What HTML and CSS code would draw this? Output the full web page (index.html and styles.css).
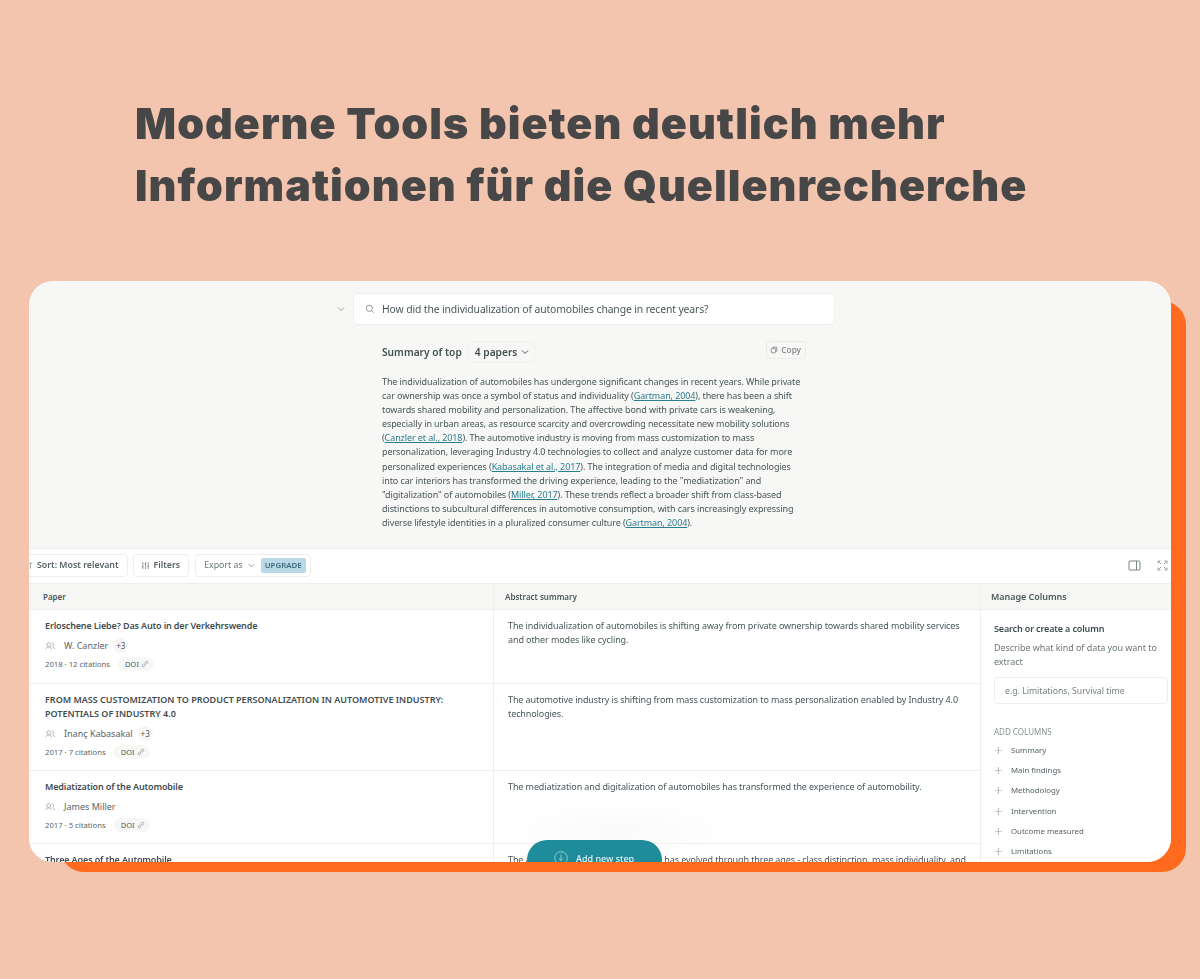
FILE: index.html
```html
<!DOCTYPE html>
<html lang="de">
<head>
<meta charset="utf-8">
<title>Quellenrecherche</title>
<link rel="stylesheet" href="styles.css">
</head>
<body>
<main class="page">
  <h1 class="headline">Moderne Tools bieten deutlich mehr<br>Informationen für die Quellenrecherche</h1>
  <div class="stage">
    <div class="backing"></div>
    <section class="card">
      <div class="top">
        <div class="query-row">
          <svg class="chev" viewBox="0 0 10 10"><path d="M2 3.500 5 6.500 8 3.500"/></svg>
          <div class="query">
            <svg class="search" viewBox="0 0 12 12"><circle cx="5.200" cy="5.200" r="3.700"/><path d="M8 8l2.600 2.600"/></svg>
            <span>How did the individualization of automobiles change in recent years?</span>
          </div>
        </div>
        <div class="summary">
          <div class="summary-head">
            <span class="summary-title">Summary of top</span>
            <span class="papers">4 papers <svg class="chev dark" viewBox="0 0 10 10"><path d="M2 3.500 5 6.500 8 3.500"/></svg></span>
            <span class="copy"><svg viewBox="0 0 10 10"><rect x="1.500" y="3" width="5.500" height="5.500" rx="1"/><path d="M3.500 3V1.500h5v5H7"/></svg>Copy</span>
          </div>
          <p class="summary-text">The individualization of automobiles has undergone significant changes in recent years. While private<br>
car ownership was once a symbol of status and individuality (<a>Gartman, 2004</a>), there has been a shift<br>
towards shared mobility and personalization. The affective bond with private cars is weakening,<br>
especially in urban areas, as resource scarcity and overcrowding necessitate new mobility solutions<br>
(<a>Canzler et al., 2018</a>). The automotive industry is moving from mass customization to mass<br>
personalization, leveraging Industry 4.0 technologies to collect and analyze customer data for more<br>
personalized experiences (<a>Kabasakal et al., 2017</a>). The integration of media and digital technologies<br>
into car interiors has transformed the driving experience, leading to the "mediatization" and<br>
"digitalization" of automobiles (<a>Miller, 2017</a>). These trends reflect a broader shift from class-based<br>
distinctions to subcultural differences in automotive consumption, with cars increasingly expressing<br>
diverse lifestyle identities in a pluralized consumer culture (<a>Gartman, 2004</a>).</p>
        </div>
      </div>
      <div class="toolbar">
        <span class="tool sort"><svg viewBox="0 0 10 10"><path d="M3 1.500v7M3 8.500 1.500 7M7 1.500v7M7 1.500 8.500 3"/></svg>Sort: Most relevant</span>
        <span class="tool filters"><svg viewBox="0 0 10 10"><path d="M2 1v8M5 1v8M8 1v8M1 6.500h2M4 3.500h2M7 6h2"/></svg>Filters</span>
        <span class="tool export">Export as <svg class="chev" viewBox="0 0 10 10"><path d="M2 3.500 5 6.500 8 3.500"/></svg><b class="upgrade">UPGRADE</b></span>
        <span class="tool-icons">
          <svg class="panel" viewBox="0 0 13 11"><rect x="1" y="1" width="11" height="9" rx="1"/><path d="M8.500 1v9"/></svg>
          <svg class="expand" viewBox="0 0 11 11"><path d="M1 3.500V1h2.500M7.500 1H10v2.500M10 7.500V10H7.500M3.500 10H1V7.500M1 1l3 3M10 1 7 4M10 10 7 7M1 10l3-3"/></svg>
        </span>
      </div>
      <div class="table">
        <div class="col col-paper">
          <div class="col-head">Paper</div>
          <article class="paper h74">
            <h3>Erloschene Liebe? Das Auto in der Verkehrswende</h3>
            <div class="authors"><svg class="people" viewBox="0 0 12 9"><circle cx="4" cy="3" r="2.200"/><path d="M.8 8c.4-1.700 1.600-2.500 3.200-2.500S6.800 6.300 7.200 8M7.500 1c1.300 0 2 .9 2 2s-.7 2-1.500 2M9 5.800c1 .3 1.700 1.100 2 2.200"/></svg><span>W. Canzler</span><em>+3</em></div>
            <div class="meta"><span>2018 · 12 citations</span><span class="doi">DOI <svg viewBox="0 0 10 10"><path d="M4 6l2-2M3.500 4.500 2 6a1.400 1.400 0 0 0 2 2l1.500-1.500M4.500 3.500 6 2a1.400 1.400 0 0 1 2 2L6.500 5.500"/></svg></span></div>
          </article>
          <article class="paper h87">
            <h3 class="caps">FROM MASS CUSTOMIZATION TO PRODUCT PERSONALIZATION IN AUTOMOTIVE INDUSTRY: POTENTIALS OF INDUSTRY 4.0</h3>
            <div class="authors"><svg class="people" viewBox="0 0 12 9"><circle cx="4" cy="3" r="2.200"/><path d="M.8 8c.4-1.700 1.600-2.500 3.200-2.500S6.800 6.300 7.200 8M7.500 1c1.300 0 2 .9 2 2s-.7 2-1.500 2M9 5.800c1 .3 1.700 1.100 2 2.200"/></svg><span>İnanç Kabasakal</span><em>+3</em></div>
            <div class="meta"><span>2017 · 7 citations</span><span class="doi">DOI <svg viewBox="0 0 10 10"><path d="M4 6l2-2M3.500 4.500 2 6a1.400 1.400 0 0 0 2 2l1.500-1.500M4.500 3.500 6 2a1.400 1.400 0 0 1 2 2L6.500 5.500"/></svg></span></div>
          </article>
          <article class="paper h73">
            <h3>Mediatization of the Automobile</h3>
            <div class="authors"><svg class="people" viewBox="0 0 12 9"><circle cx="4" cy="3" r="2.200"/><path d="M.8 8c.4-1.700 1.600-2.500 3.200-2.500S6.800 6.300 7.200 8M7.500 1c1.300 0 2 .9 2 2s-.7 2-1.500 2M9 5.800c1 .3 1.700 1.100 2 2.200"/></svg><span>James Miller</span></div>
            <div class="meta"><span>2017 · 5 citations</span><span class="doi">DOI <svg viewBox="0 0 10 10"><path d="M4 6l2-2M3.500 4.500 2 6a1.400 1.400 0 0 0 2 2l1.500-1.500M4.500 3.500 6 2a1.400 1.400 0 0 1 2 2L6.500 5.500"/></svg></span></div>
          </article>
          <article class="paper">
            <h3>Three Ages of the Automobile</h3>
          </article>
        </div>
        <div class="col col-abstract">
          <div class="col-head">Abstract summary</div>
          <div class="abstract h74">The individualization of automobiles is shifting away from private ownership towards shared mobility services and other modes like cycling.</div>
          <div class="abstract h87">The automotive industry is shifting from mass customization to mass personalization enabled by Industry 4.0 technologies.</div>
          <div class="abstract h73">The mediatization and digitalization of automobiles has transformed the experience of automobility.</div>
          <div class="abstract last">The automobile's cultural importance has evolved through three ages - class distinction, mass individuality, and</div>
        </div>
        <aside class="col col-manage">
          <div class="col-head manage-head">Manage Columns</div>
          <div class="manage-body">
            <h4>Search or create a column</h4>
            <p>Describe what kind of data you want to extract</p>
            <div class="manage-input">e.g. Limitations, Survival time</div>
            <div class="add-label">ADD COLUMNS</div>
            <ul class="add-list">
              <li>Summary</li>
              <li>Main findings</li>
              <li>Methodology</li>
              <li>Intervention</li>
              <li>Outcome measured</li>
              <li>Limitations</li>
            </ul>
          </div>
        </aside>
      </div>
      <div class="fade"></div>
      <div class="add-step"><svg viewBox="0 0 14 14"><circle cx="7" cy="7" r="6.300"/><path d="M7 3.500v6M4.800 7.500 7 9.700l2.200-2.200"/></svg>Add new step</div>
    </section>
  </div>
</main>
</body>
</html>
```
FILE: styles.css
```css
* { box-sizing: border-box; }
html, body { margin: 0; padding: 0; }
body { background: #f3c4ae; font-family: "Noto Sans", "Open Sans", sans-serif; color: #3f4a4d; }
.page { width: 1200px; height: 979px; padding: 92px 0 0 29px; overflow: hidden; }
.headline { margin: 0 0 0 106px; font-family: Inter, sans-serif; font-weight: 900; font-size: 43px; line-height: 62px; letter-spacing: 1.03px; color: #474747; filter: blur(.25px); }
.stage { position: relative; margin-top: 65px; width: 1142px; height: 581px; }
.backing { position: absolute; left: 31px; top: 20px; right: -15px; bottom: -10px; background: #ff6a1f; border-radius: 24px; }
.card { position: absolute; inset: 0; border-radius: 24px; overflow: hidden; background: #f7f7f5; display: flex; flex-direction: column; }
.top, .toolbar, .table, .add-step { filter: blur(.4px); }
svg { fill: none; stroke: currentColor; stroke-width: 1; flex: none; }

.top { height: 267px; padding-top: 12px; }
.query-row { display: flex; align-items: center; margin-left: 307px; gap: 7px; }
.chev { width: 10px; height: 10px; color: #9aa0a0; }
.chev.dark { color: #4a5557; }
.query { width: 482px; height: 32px; background: #fff; border: 1px solid #eeeeec; border-radius: 5px; display: flex; align-items: center; padding-left: 11px; gap: 7px; font-size: 10.400px; letter-spacing: -.13px; color: #4b5659; }
.search { width: 10px; height: 10px; color: #7d8587; }
.summary { margin-left: 353px; width: 424px; }
.summary-head { display: flex; align-items: center; height: 26px; margin-top: 14px; font-size: 10.200px; font-weight: 600; color: #445053; }
.papers { margin-left: 4px; height: 22px; padding: 0 6px 0 8px; border: 1px solid #efefed; border-radius: 11px; display: flex; align-items: center; gap: 3px; font-size: 10.200px; }
.copy { margin-left: auto; margin-top: -5px; height: 18px; padding: 0 4px 0 3px; border: 1px solid #ecebe9; border-radius: 3px; display: flex; align-items: center; gap: 3px; font-size: 8.300px; font-weight: 500; color: #7b8385; }
.copy svg { width: 8px; height: 8px; }
.summary-text { margin: 10px 0 0; font-size: 9px; line-height: 14.100px; letter-spacing: -.1px; color: #49565a; white-space: nowrap; }
.summary-text a { color: #2a7e92; text-decoration: underline; }

.toolbar { height: 35px; padding-bottom: 2px; background: #fff; border-top: 1px solid #efefed; display: flex; align-items: center; gap: 5px; }
.tool { height: 23px; background: #fff; border: 1px solid #eeeeec; border-radius: 4px; display: flex; align-items: center; gap: 4px; padding: 0 8px; font-size: 8.800px; font-weight: 600; color: #576265; }
.tool svg { width: 9px; height: 9px; color: #8d9496; }
.sort { margin-left: -14px; padding-right: 8px; }
.filters { padding: 0 8px 0 7px; margin-right: 1px; }
.export { padding: 0 4px 0 8px; font-weight: 400; color: #6b7578; }
.export .chev { width: 9px; height: 9px; }
.upgrade { margin: 0 0 0 1px; height: 15px; padding: 0 4px; background: #bad9e6; border-radius: 2px; display: flex; align-items: center; font-size: 7.900px; font-weight: 600; color: #3d6a7b; }
.tool-icons { margin-left: auto; padding-right: 3px; display: flex; align-items: center; gap: 16px; color: #7a8385; }
.panel { width: 13px; height: 11px; }
.expand { width: 11px; height: 11px; color: #9aa1a3; }

.table { flex: 1; display: flex; min-height: 0; background: #fff; }
.col { flex: none; border-right: 1px solid #efefed; }
.col-paper { width: 465px; }
.col-abstract { width: 487px; }
.col-manage { width: 190px; border-right: 0; }
.col-head { height: 27px; background: #f6f6f4; border-top: 1px solid #eeeeec; border-bottom: 1px solid #eeeeec; display: flex; align-items: center; padding-left: 14px; font-size: 8px; font-weight: 600; color: #4b585b; }
.col-abstract .col-head { padding-left: 11px; }
.manage-head { padding-left: 10px; font-size: 9px; letter-spacing: -.05px; }
.h73 { height: 73px; }
.h74 { height: 74px; }
.h87 { height: 87px; }
.paper, .abstract { border-bottom: 1px solid #f0f0ee; }
.paper { padding: 9px 16px 0; }
.paper h3 { margin: 0; font-size: 9px; line-height: 14px; font-weight: 600; letter-spacing: -.14px; color: #3f4c50; }
.paper h3.caps { letter-spacing: 0; }
.authors { display: flex; align-items: center; height: 16px; margin-top: 4.500px; font-size: 9px; color: #5a6568; }
.people { width: 11px; height: 8px; margin-right: 8px; color: #a5abac; }
.authors em { font-style: normal; margin-left: 5px; width: 15px; height: 15px; border-radius: 50%; background: #f6f6f4; display: flex; align-items: center; justify-content: center; font-size: 8px; color: #4f5a5d; }
.meta { display: flex; align-items: center; height: 15px; margin-top: 3px; gap: 8px; font-size: 7.700px; color: #5a6568; }
.doi { height: 14px; padding: 0 5px 0 7px; background: #f7f7f5; border-radius: 7px; display: flex; align-items: center; gap: 2px; font-size: 7.500px; color: #4f5a5d; }
.doi svg { width: 8px; height: 8px; color: #8b9395; }
.abstract { padding: 9px 14px 0; font-size: 9px; line-height: 14px; letter-spacing: -.1px; color: #49565a; }
.abstract.last { height: 30px; white-space: nowrap; overflow: hidden; }

.manage-body { padding: 12px 0 0 13px; }
.manage-body h4 { margin: 0; font-size: 9px; line-height: 14px; font-weight: 600; letter-spacing: -.15px; color: #3f4c50; }
.manage-body p { margin: 5px 0 0; font-size: 9px; line-height: 14px; letter-spacing: -.06px; color: #6c7679; width: 170px; }
.manage-input { margin-top: 8px; width: 174px; height: 27px; border: 1px solid #eeeeec; border-radius: 4px; padding-left: 10px; display: flex; align-items: center; font-size: 8.700px; color: #788184; }
.add-label { margin-top: 22px; font-size: 8px; line-height: 12px; color: #8a9294; }
.add-list { list-style: none; margin: 2px 0 0; padding: 0; }
.add-list li { height: 20.200px; display: flex; align-items: center; padding-left: 17px; font-size: 7.800px; color: #566265; position: relative; }
.add-list li::before { content: "+"; position: absolute; left: 0; font-size: 15px; font-weight: 300; color: #9ba2a3; }

.fade { position: absolute; left: 470px; top: 520px; width: 240px; height: 61px; background: radial-gradient(closest-side, rgba(246,246,245,.6), rgba(255,255,255,0)); }
.add-step { position: absolute; left: 498px; top: 559px; width: 135px; height: 40px; border-radius: 20px; background: #1f8c9b; color: #dff0f2; display: flex; align-items: flex-start; padding: 12px 0 0 27px; gap: 8px; font-size: 9px; font-weight: 500; }
.add-step svg { width: 14px; height: 14px; margin-top: -1px; color: #8fc6ce; }
```
